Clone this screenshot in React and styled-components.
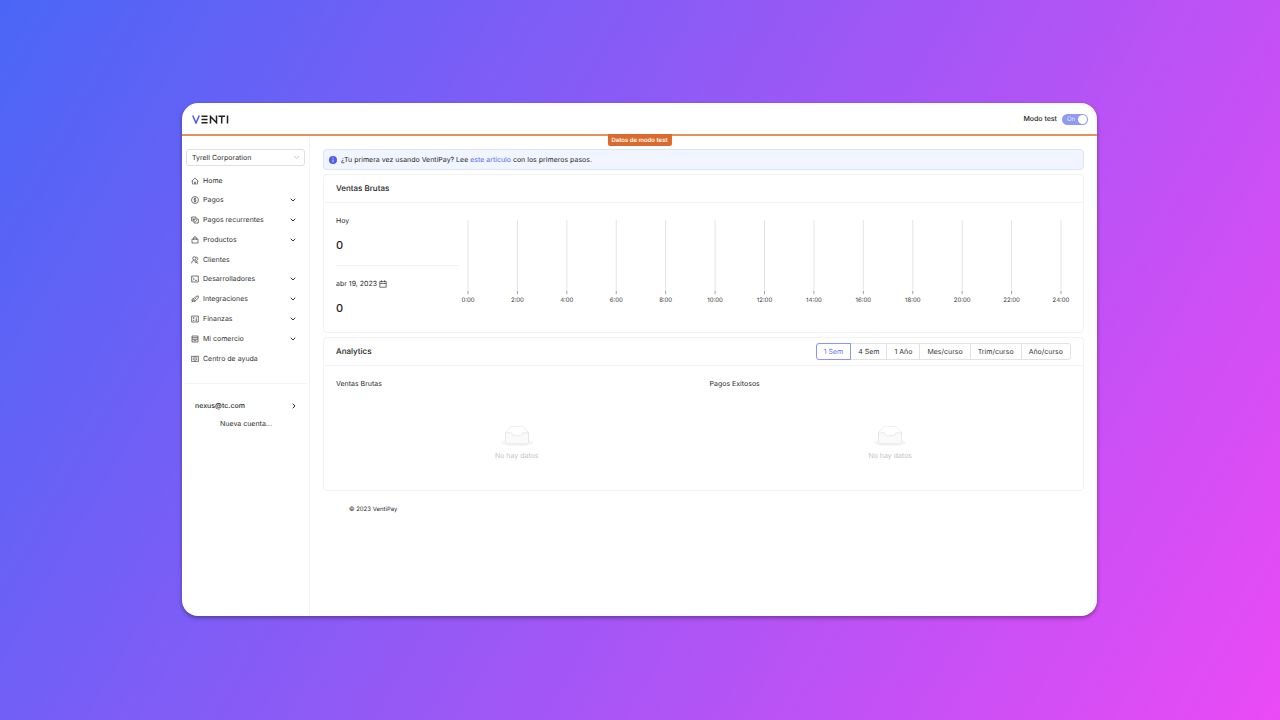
import styled, { createGlobalStyle, css } from 'styled-components';
import { AiOutlineHome } from 'react-icons/ai';
import { FiChevronDown, FiChevronRight } from 'react-icons/fi';

const GlobalStyle = createGlobalStyle`
  * {
    box-sizing: border-box;
  }

  body {
    margin: 0;
    font-family: Inter, 'Liberation Sans', sans-serif;
    font-size: 7px;
    line-height: 12px;
    color: #2b2b2b;
    text-rendering: geometricPrecision;
  }

  button, select {
    font-family: inherit;
    font-size: inherit;
    line-height: inherit;
    color: inherit;
    text-rendering: inherit;
  }

  h2, h3, p, ul {
    margin: 0;
    padding: 0;
  }
`;

const Page = styled.div`
  display: flex;
  min-height: 100vh;
  padding: 103px 183px 104px 182px;
  background: linear-gradient(120deg, #4a66f6 0%, #ea4af5 100%);
`;

const Window = styled.div`
  display: flex;
  flex-direction: column;
  flex: 1;
  min-width: 0;
  background: #fff;
  border-radius: 16px;
  box-shadow: 0 2px 4px rgba(0, 0, 0, 0.35);
`;

const Header = styled.header`
  position: relative;
  display: flex;
  align-items: center;
  justify-content: space-between;
  height: 33px;
  padding: 1px 9px 0 10px;
  border-bottom: 2px solid #e2915f;
`;

const TestBadge = styled.span`
  position: absolute;
  top: 100%;
  left: 50%;
  transform: translateX(-50%);
  padding: 1px 4px 0;
  border-radius: 0 0 2px 2px;
  background: #dc6b2b;
  color: #fff;
  font-size: 6px;
  line-height: 11px;
  font-weight: 600;
  white-space: nowrap;
`;

const TestMode = styled.label`
  display: flex;
  align-items: center;
  gap: 5px;
  font-weight: 500;
  color: #1c1c1c;
`;

const Switch = styled.span`
  display: flex;
  align-items: center;
  justify-content: space-between;
  position: relative;
  width: 26px;
  height: 11px;
  padding: 0 1px 0 5px;
  border-radius: 6px;
  background: #8f9bf0;
  color: #e4e8ff;
  font-size: 6px;
  line-height: 11px;
  font-weight: 400;

  &::after {
    content: '';
    width: 9px;
    height: 9px;
    border-radius: 50%;
    background: #fff;
  }
`;

const SwitchInput = styled.input`
  position: absolute;
  inset: 0;
  width: 100%;
  height: 100%;
  margin: 0;
  opacity: 0;
  cursor: pointer;
`;

const Body = styled.div`
  display: flex;
  flex: 1;
`;

const Sidebar = styled.aside`
  width: 128px;
  padding-top: 13px;
  border-right: 1px solid #f3f3f3;
`;

const SelectBox = styled.div`
  position: relative;
  margin: 0 4px 5px;
`;

const CompanySelect = styled.select`
  appearance: none;
  display: block;
  width: 100%;
  height: 17px;
  padding: 0 5px;
  border: 1px solid #dfdfdf;
  border-radius: 3px;
  background: #fff;
`;

const SelectArrow = styled(FiChevronDown)`
  position: absolute;
  top: 4px;
  right: 4px;
  width: 9px;
  height: 9px;
  color: #b5b5b5;
  stroke-width: 2px;
  pointer-events: none;
`;

const Menu = styled.ul`
  list-style: none;
`;

const menuEntry = css`
  display: flex;
  align-items: center;
  gap: 4px;
  width: 100%;
  padding: 0 12px 0 9px;
  border: none;
  background: none;
  color: #333;
  text-align: left;
  text-decoration: none;
  cursor: pointer;
`;

const MenuLink = styled.a`
  ${menuEntry}
  height: 19px;
  padding-top: 1px;
`;

const MenuButton = styled.button`
  ${menuEntry}
  height: 20px;
`;

const MenuIcon = styled.span`
  display: flex;
  width: 8px;
  height: 8px;
`;

const MenuText = styled.span`
  flex: 1;
`;

const Chevron = styled(FiChevronDown)`
  width: 8px;
  height: 8px;
  stroke-width: 3px;
`;

const Account = styled.div`
  display: flex;
  flex-direction: column;
  margin: 15px 2px 0 3px;
  padding-top: 12px;
  border-top: 1px solid #f3f3f3;
`;

const AccountButton = styled.button`
  display: flex;
  align-items: center;
  justify-content: space-between;
  height: 20px;
  padding: 0 9px 0 10px;
  border: none;
  background: none;
  font-weight: 500;
  cursor: pointer;
`;

const AccountArrow = styled(FiChevronRight)`
  width: 8px;
  height: 8px;
  stroke-width: 3px;
`;

const NewAccount = styled.a`
  height: 16px;
  line-height: 16px;
  color: inherit;
  text-align: center;
  text-decoration: none;
`;

const Main = styled.main`
  flex: 1;
  min-width: 0;
  padding: 13px;
`;

const Alert = styled.div`
  display: flex;
  align-items: center;
  gap: 4px;
  height: 21px;
  margin-bottom: 4px;
  padding: 0 5px;
  border: 1px solid #dbe4fd;
  border-radius: 4px;
  background: #f0f5ff;
`;

const InlineLink = styled.a`
  color: #5767f5;
  text-decoration: none;
`;

const Card = styled.section`
  margin-bottom: 4px;
  border: 1px solid #f3f3f3;
  border-radius: 4px;
`;

const CardHead = styled.div`
  display: flex;
  align-items: center;
  justify-content: space-between;
  height: 28px;
  padding: 0 12px;
  border-bottom: 1px solid #f3f3f3;
`;

const CardTitle = styled.h2`
  font-size: 8px;
  line-height: 13px;
  font-weight: 500;
  color: #222;
`;

const Sales = styled.div`
  display: flex;
  height: 129px;
  padding: 12px 22px 0 12px;
`;

const Totals = styled.div`
  flex: none;
  width: 123px;
  margin-right: 9px;
`;

const Total = styled.div`
  height: 63px;

  & + & {
    padding-top: 12px;
    border-top: 1px solid #f3f3f3;
  }

  &:first-child {
    height: 50px;
  }
`;

const TotalLabel = styled.p`
  display: flex;
  align-items: center;
  gap: 2px;
`;

const TotalValue = styled.p`
  margin-top: 11px;
  font-size: 11px;
  line-height: 14px;
  font-weight: 500;
  color: #222;
`;

const Chart = styled.svg`
  flex: 1;
  min-width: 0;
  height: 90px;
  margin-top: 5px;
  overflow: visible;
`;

const Ranges = styled.div`
  display: flex;
`;

const RangeButton = styled.button`
  position: relative;
  height: 17px;
  margin-left: -1px;
  padding: 0 7px;
  border: 1px solid ${({ $active }) => ($active ? '#8995f7' : '#e2e2e2')};
  background: #fff;
  color: ${({ $active }) => ($active ? '#6674f6' : '#333')};
  z-index: ${({ $active }) => ($active ? 1 : 0)};
  cursor: pointer;

  &:first-child {
    border-radius: 3px 0 0 3px;
  }

  &:last-child {
    border-radius: 0 3px 3px 0;
  }
`;

const Stats = styled.div`
  display: grid;
  grid-template-columns: 1fr 1fr;
  gap: 12px;
  height: 124px;
  padding: 12px;
`;

const StatTitle = styled.h3`
  font-size: 7px;
  line-height: 12px;
  font-weight: 400;
`;

const Empty = styled.div`
  display: flex;
  flex-direction: column;
  align-items: center;
  gap: 3px;
  margin-top: 36px;
  color: #c4c4c4;
`;

const Footer = styled.footer`
  padding: 9px 26px;
  font-size: 6px;
`;

const icons = {
  dollar: (
    <>
      <circle cx="12" cy="12" r="10.500" />
      <path d="M15.5 9c-.5-1-1.700-1.500-3.500-1.500-4 0-4 4.500 0 4.500s4 4.500 0 4.500c-1.800 0-3-.5-3.500-1.500M12 5v14" />
    </>
  ),
  recurring: (
    <>
      <path d="M8 15H2V3h13v5" />
      <path d="M9 9h13v12H9z" />
      <path d="M6 7v4h3M13 17l5-4" />
    </>
  ),
  bag: <path d="M3 9h18v12H3zM8 12V6a4 4 0 0 1 8 0v6" />,
  users: (
    <>
      <circle cx="10" cy="7" r="5" />
      <path d="M2 22c0-6 3-9 8-9M16 3c5 1 6 7 2 10" />
      <circle cx="15" cy="17" r="3" />
      <path d="M17 19l5 4" />
    </>
  ),
  terminal: <path d="M2 3h20v18H2zM6 8l4 4-4 4M12 16h6" />,
  rocket: <path d="M8 11l6-6c2-2 5-2 8-2 0 3 0 6-2 8l-6 6c-3 2-6-3-6-6zM8 11H5l-3 6h5M13 17l-3 4-3-4M11 13l5-5M2 22l5-5" />,
  finance: <path d="M2 3h20v18H2zM6 9h4M14 9h4M8 7v4M6 16h4M14 14h4M14 17h4" />,
  store: <path d="M3 3h18v18H3zM3 8h18M3 13h18M8 17h8" />,
  book: <path d="M1 4h22v15H1zM12 4v17M5 9h4M5 13h4M15 9h4M15 13h4" />,
};

const menuItems = [
  { label: 'Home', icon: 'home' },
  { label: 'Pagos', icon: 'dollar', open: true },
  { label: 'Pagos recurrentes', icon: 'recurring', open: true },
  { label: 'Productos', icon: 'bag', open: true },
  { label: 'Clientes', icon: 'users' },
  { label: 'Desarrolladores', icon: 'terminal', open: true },
  { label: 'Integraciones', icon: 'rocket', open: true },
  { label: 'Finanzas', icon: 'finance', open: true },
  { label: 'Mi comercio', icon: 'store', open: true },
  { label: 'Centro de ayuda', icon: 'book' },
];

const ranges = ['1 Sem', '4 Sem', '1 Año', 'Mes/curso', 'Trim/curso', 'Año/curso'];

const hours = Array.from({ length: 13 }, (_, i) => i * 2);

const Icon = ({ name }) => (
  <MenuIcon>
    {name === 'home' ? (
      <AiOutlineHome size={8} />
    ) : (
      <svg width="8" height="8" viewBox="0 0 24 24" fill="none" stroke="currentColor" strokeWidth="2">
        {icons[name]}
      </svg>
    )}
  </MenuIcon>
);

const Logo = () => (
  <svg width="37" height="9" viewBox="0 0 37 9" fill="none" strokeWidth="1.5" role="img" aria-label="Venti">
    <path d="M.7 .5 4 8 7.300 .5" stroke="#4b5cf0" />
    <path d="M9.500 1.200h6M9.500 4.500h6M9.500 7.800h6M18.500 8.500V1.500l6 6.200V.5M26.500 1.200h6.500M29.700 1.200v7.300M35.500 .5v8" stroke="#222" />
  </svg>
);

const InfoIcon = () => (
  <svg width="8" height="8" viewBox="0 0 8 8">
    <circle cx="4" cy="4" r="4" fill="#4c5df0" />
    <path d="M4 1.700v1M4 3.500v2.800" stroke="#fff" strokeWidth=".8" />
  </svg>
);

const CalendarIcon = () => (
  <svg width="8" height="8" viewBox="0 0 8 8" fill="none" stroke="#333" strokeWidth=".7">
    <path d="M.8 1.500h6.400v5.700H.8zM.8 3.500h6.400M2.400 .3v2M5.600 .3v2" />
  </svg>
);

const EmptyBox = () => (
  <svg width="32" height="21" viewBox="0 0 64 41">
    <ellipse cx="32" cy="33" rx="32" ry="7" fill="#f5f5f5" />
    <g fillRule="nonzero" stroke="#d9d9d9">
      <path
        fill="#fff"
        d="M55 12.760L44.854 1.258C44.367.474 43.656 0 42.907 0H21.093c-.749 0-1.460.474-1.947 1.257L9 12.761V22h46v-9.240z"
      />
      <path
        fill="#fafafa"
        d="M41.613 15.931c0-1.605.994-2.930 2.227-2.931H55v18.137C55 33.260 53.680 35 52.050 35h-40.100C10.320 35 9 33.259 9 31.137V13h11.160c1.233 0 2.227 1.323 2.227 2.928v.022c0 1.605 1.005 2.901 2.237 2.901h14.752c1.232 0 2.237-1.308 2.237-2.913v-.007z"
      />
    </g>
  </svg>
);

const SalesChart = () => (
  <Chart>
    {hours.map((hour, i) => {
      const x = `${(i * 100) / 12}%`;
      return (
        <g key={hour}>
          <line x1={x} x2={x} y1="0" y2="71" stroke="#e4e4e4" />
          <line x1={x} x2={x} y1="71" y2="74" stroke="#777" strokeWidth=".7" />
          <text x={x} y="82" textAnchor="middle" fontSize="6" fill="#333">{hour}:00</text>
        </g>
      );
    })}
  </Chart>
);

const Stat = ({ title }) => (
  <div>
    <StatTitle>{title}</StatTitle>
    <Empty>
      <EmptyBox />
      <p>No hay datos</p>
    </Empty>
  </div>
);

const App = () => {
  return (
    <>
      <GlobalStyle />
      <Page>
        <Window>
          <Header>
            <Logo />
            <TestMode>
              Modo test
              <Switch>
                On
                <SwitchInput type="checkbox" role="switch" defaultChecked />
              </Switch>
            </TestMode>
            <TestBadge>Datos de modo test</TestBadge>
          </Header>

          <Body>
            <Sidebar>
              <SelectBox>
                <CompanySelect aria-label="Tyrell Corporation">
                  <option>Tyrell Corporation</option>
                </CompanySelect>
                <SelectArrow />
              </SelectBox>

              <Menu>
                {menuItems.map((item) => (
                  <li key={item.label}>
                    {item.open ? (
                      <MenuButton type="button">
                        <Icon name={item.icon} />
                        <MenuText>{item.label}</MenuText>
                        <Chevron />
                      </MenuButton>
                    ) : (
                      <MenuLink href="#">
                        <Icon name={item.icon} />
                        <MenuText>{item.label}</MenuText>
                      </MenuLink>
                    )}
                  </li>
                ))}
              </Menu>

              <Account>
                <AccountButton type="button">
                  nexus@tc.com
                  <AccountArrow />
                </AccountButton>
                <NewAccount href="#">Nueva cuenta...</NewAccount>
              </Account>
            </Sidebar>

            <Main>
              <Alert>
                <InfoIcon />
                <p>
                  ¿Tu primera vez usando VentiPay? Lee <InlineLink href="#">este artículo</InlineLink> con los primeros pasos.
                </p>
              </Alert>

              <Card>
                <CardHead>
                  <CardTitle>Ventas Brutas</CardTitle>
                </CardHead>
                <Sales>
                  <Totals>
                    <Total>
                      <TotalLabel>Hoy</TotalLabel>
                      <TotalValue>0</TotalValue>
                    </Total>
                    <Total>
                      <TotalLabel>abr 19, 2023 <CalendarIcon /></TotalLabel>
                      <TotalValue>0</TotalValue>
                    </Total>
                  </Totals>
                  <SalesChart />
                </Sales>
              </Card>

              <Card>
                <CardHead>
                  <CardTitle>Analytics</CardTitle>
                  <Ranges>
                    {ranges.map((range, i) => (
                      <RangeButton key={range} type="button" $active={i === 0}>{range}</RangeButton>
                    ))}
                  </Ranges>
                </CardHead>
                <Stats>
                  <Stat title="Ventas Brutas" />
                  <Stat title="Pagos Exitosos" />
                </Stats>
              </Card>

              <Footer>© 2023 VentiPay</Footer>
            </Main>
          </Body>
        </Window>
      </Page>
    </>
  );
};

export default App;
